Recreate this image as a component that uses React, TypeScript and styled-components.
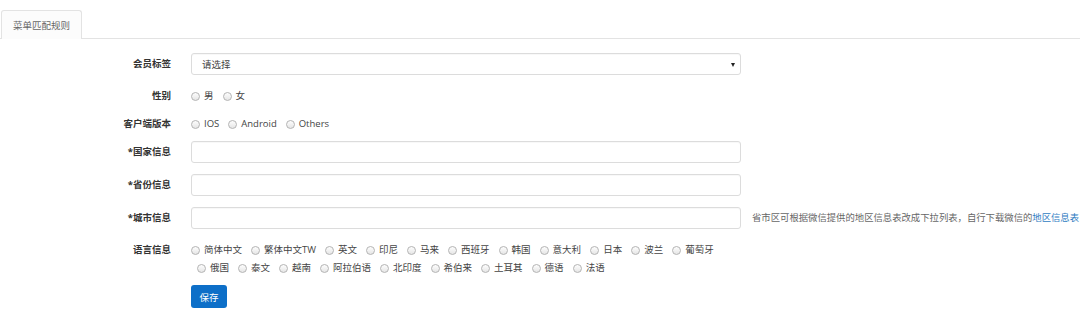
import React from 'react';
import styled, {createGlobalStyle} from 'styled-components';

const Global = createGlobalStyle`
  html, body {
    margin: 0;
    padding: 0;
    background: #fff;
  }
  body {
    font-family: "Open Sans", "Noto Sans CJK SC", sans-serif;
    font-size: 9.5px;
    color: #333;
    overflow: hidden;
  }
`;

const Page = styled.div`
  width: 1080px;
  height: 335px;
  overflow: hidden;
  padding-top: 10px;
  box-sizing: border-box;
`;

const TabBar = styled.div`
  display: flex;
  padding-left: 1px;
  border-bottom: 1px solid #e3e3e3;
`;

const Tab = styled.div`
  height: 27px;
  padding: 0 11px;
  display: flex;
  align-items: center;
  border: 1px solid #e3e3e3;
  border-bottom: none;
  border-radius: 3px 3px 0 0;
  background: #fcfcfc;
  color: #666;
  margin-bottom: -1px;
  padding-bottom: 1px;
`;

const Form = styled.div`
  padding-top: 14px;
`;

const Row = styled.div<{$h: number; $mb: number}>`
  display: grid;
  grid-template-columns: 171px 550px max-content;
  column-gap: 20px;
  align-items: start;
  min-height: ${p => p.$h}px;
  margin-bottom: ${p => p.$mb}px;
`;

const Label = styled.div<{$h: number}>`
  text-align: right;
  font-weight: bold;
  color: #333;
  line-height: ${p => p.$h}px;
  white-space: nowrap;
`;

const Input = styled.div`
  height: 22px;
  box-sizing: border-box;
  border: 1px solid #dcdcdc;
  border-radius: 3px;
  background: #fff;
  box-shadow: inset 0 1px 1px rgba(0, 0, 0, 0.03);
`;

const SelectBox = styled(Input)`
  display: flex;
  align-items: center;
  justify-content: space-between;
  padding: 0 5px 0 10px;
  color: #444;
`;

const Caret = styled.span`
  width: 0;
  height: 0;
  border-left: 2.5px solid transparent;
  border-right: 2.5px solid transparent;
  border-top: 4px solid #222;
  margin-top: 1px;
`;

const Help = styled.div`
  margin-left: -9px;
  line-height: 22px;
  font-size: 9.35px;
  color: #666;
  white-space: nowrap;
`;

const Link = styled.a`
  color: #2f7cc2;
  text-decoration: none;
`;

const Options = styled.div<{$lh: number}>`
  display: flex;
  flex-wrap: wrap;
  column-gap: 3px;
  line-height: ${p => p.$lh}px;
`;

const Option = styled.label`
  display: inline-flex;
  align-items: center;
  white-space: nowrap;
  color: #444;
  margin-left: 6px;
  &:first-child {
    margin-left: 0;
  }
`;

const Radio = styled.span`
  width: 9px;
  height: 9px;
  box-sizing: border-box;
  border-radius: 50%;
  border: 1px solid #b4b4b4;
  background: linear-gradient(#fdfdfd, #e6e6e6);
  margin-right: 4px;
`;

const Button = styled.button`
  width: 36px;
  height: 23px;
  border: none;
  border-radius: 3px;
  background: #0d6fc8;
  color: #fff;
  font-family: inherit;
  font-size: 9.5px;
  padding: 0;
  margin-top: -1px;
`;

function RadioGroup({items, lh}: {items: string[]; lh: number}) {
  return (
    <Options $lh={lh}>
      {items.map(t => (
        <Option key={t}>
          <Radio/>
          {t}
        </Option>
      ))}
    </Options>
  );
}

const languages = [
  '简体中文', '繁体中文TW', '英文', '印尼', '马来', '西班牙', '韩国', '意大利', '日本', '波兰', '葡萄牙',
  '俄国', '泰文', '越南', '阿拉伯语', '北印度', '希伯来', '土耳其', '德语', '法语',
];

export default function App() {
  return (
    <Page>
      <Global/>
      <TabBar>
        <Tab>菜单匹配规则</Tab>
      </TabBar>
      <Form>
        <Row $h={22} $mb={12}>
          <Label $h={22}>会员标签</Label>
          <SelectBox>
            <span>请选择</span>
            <Caret/>
          </SelectBox>
        </Row>
        <Row $h={18} $mb={10}>
          <Label $h={18}>性别</Label>
          <RadioGroup items={['男', '女']} lh={18}/>
        </Row>
        <Row $h={18} $mb={8}>
          <Label $h={18}>客户端版本</Label>
          <RadioGroup items={['IOS', 'Android', 'Others']} lh={18}/>
        </Row>
        <Row $h={22} $mb={11}>
          <Label $h={22}>*国家信息</Label>
          <Input/>
        </Row>
        <Row $h={22} $mb={11}>
          <Label $h={22}>*省份信息</Label>
          <Input/>
        </Row>
        <Row $h={22} $mb={12}>
          <Label $h={22}>*城市信息</Label>
          <Input/>
          <Help>
            省市区可根据微信提供的地区信息表改成下拉列表，自行下载微信的<Link href="#">地区信息表</Link>
          </Help>
        </Row>
        <Row $h={36} $mb={9}>
          <Label $h={18}>语言信息</Label>
          <RadioGroup items={languages} lh={18}/>
        </Row>
        <Row $h={23} $mb={0}>
          <div/>
          <div><Button>保存</Button></div>
        </Row>
      </Form>
    </Page>
  );
}
